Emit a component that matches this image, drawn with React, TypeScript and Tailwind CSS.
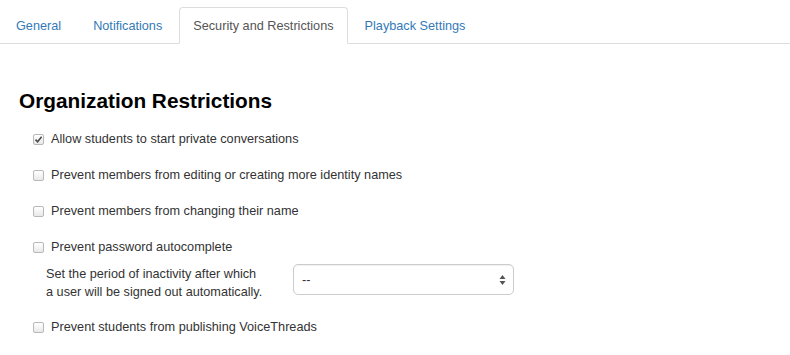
import React from "react";

const tabs = ["General", "Notifications", "Security and Restrictions", "Playback Settings"];
const ACTIVE = 2;

function Box({ checked }: { checked?: boolean }) {
  return (
    <span className="flex h-[11px] w-[11px] shrink-0 items-center justify-center rounded-[2px] border border-[#b8b8b8] bg-gradient-to-b from-white to-[#e9e9e9]">
      {checked && (
        <svg width="9" height="9" viewBox="0 0 9 9">
          <path d="M1.5 4.6 L3.6 6.8 L7.6 1.8" fill="none" stroke="#4a4a4a" strokeWidth="1.6" />
        </svg>
      )}
    </span>
  );
}

function Row({ label, checked }: { label: string; checked?: boolean }) {
  return (
    <div className="flex h-[36px] items-center gap-[7px] pl-[14px]">
      <Box checked={checked} />
      <span>{label}</span>
    </div>
  );
}

export default function App() {
  return (
    <div className="h-[355px] w-[790px] overflow-hidden bg-white font-['Liberation_Sans',Arial,sans-serif] text-[12.7px] leading-[18px] text-[#333]">
      <ul className="mt-[7px] flex border-b border-[#ddd] pl-px">
        {tabs.map((t, i) => (
          <li key={t} className="-mb-px mr-[2px]">
            {i === ACTIVE ? (
              <span className="block rounded-t-[4px] border border-[#ddd] border-b-white bg-white px-[13px] pt-[9px] pb-[8px] text-[#555]">
                {t}
              </span>
            ) : (
              <span className="block border border-transparent px-[14px] pt-[9px] pb-[8px] text-[#337ab7]">{t}</span>
            )}
          </li>
        ))}
      </ul>

      <div className="pl-[19px]">
        <h3 className="mt-[45px] text-[20.8px] leading-[24px] font-bold text-black">Organization Restrictions</h3>
        <div className="mt-[8px]">
          <Row label="Allow students to start private conversations" checked />
          <Row label="Prevent members from editing or creating more identity names" />
          <Row label="Prevent members from changing their name" />
          <Row label="Prevent password autocomplete" />
          <div className="flex items-start pl-[27px]">
            <p className="w-[247px]">
              Set the period of inactivity after which
              <br />a user will be signed out automatically.
            </p>
            <div className="-mt-[1px] flex h-[31px] w-[221px] items-center justify-between rounded-[5px] border border-[#ccc] bg-white pl-[8px] pr-[7px] shadow-[inset_0_1px_1px_rgba(0,0,0,0.06)]">
              <span>--</span>
              <svg width="7" height="12" viewBox="0 0 7 12">
                <path d="M3.5 1 L6.5 5 L0.5 5 Z" fill="#555" />
                <path d="M3.5 11 L6.5 7 L0.5 7 Z" fill="#555" />
              </svg>
            </div>
          </div>
          <div className="mt-[8px]">
            <Row label="Prevent students from publishing VoiceThreads" />
          </div>
        </div>
      </div>
    </div>
  );
}
